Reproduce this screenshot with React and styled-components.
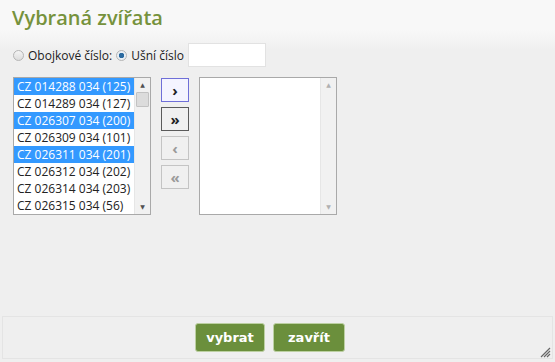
import styled, { createGlobalStyle } from "styled-components";

const Global = createGlobalStyle`
  html, body { margin: 0; padding: 0; }
  body {
    width: 555px;
    height: 362px;
    overflow: hidden;
    background: #f0f0f0;
    font-family: "Open Sans", "DejaVu Sans", sans-serif;
  }
`;

const Dialog = styled.div`
  width: 555px;
  height: 362px;
  display: flex;
  flex-direction: column;
  background: linear-gradient(#f8f8f8 0px, #f8f8f8 30px, #efefef 50px, #efefef 100%);
`;

const Title = styled.h1`
  margin: 0;
  height: 35px;
  padding: 0 12px;
  display: flex;
  align-items: center;
  font-size: 20px;
  font-weight: 600;
  color: #76923c;
`;

const Content = styled.div`
  flex: 1;
  padding: 8px 13px 0 13px;
  display: flex;
  flex-direction: column;
  gap: 10px;
`;

const FilterRow = styled.div`
  display: flex;
  align-items: center;
  height: 24px;
  font-size: 12px;
  color: #222;
`;

const Radio = styled.span`
  width: 9px;
  height: 9px;
  border-radius: 50%;
  border: 1px solid #b5b5b5;
  background: ${p => p.checked
    ? "radial-gradient(circle, #2b6aa0 0 2.5px, #e8eef4 3px)"
    : "linear-gradient(#f4f4f4, #dcdcdc)"};
  margin: 0 4px 0 ${p => p.first ? "0" : "4px"};
`;

const TextBox = styled.span`
  width: 76px;
  height: 22px;
  margin-left: 4px;
  background: #fff;
  border: 1px solid #e2e2e2;
`;

const Picker = styled.div`
  display: flex;
  align-items: flex-start;
`;

const ListBox = styled.div`
  width: 136px;
  height: 136px;
  background: #fff;
  border: 1px solid #a9a9a9;
  display: flex;
`;

const Items = styled.div`
  flex: 1;
  overflow: hidden;
`;

const Item = styled.div`
  height: 17px;
  line-height: 17px;
  padding-left: 3px;
  font-size: 12px;
  white-space: nowrap;
  color: ${p => p.selected ? "#fff" : "#222"};
  background: ${p => p.selected ? "#3399ff" : "transparent"};
`;

const Scrollbar = styled.div`
  width: 15px;
  display: flex;
  flex-direction: column;
  background: #f1f1f1;
  border-left: 1px solid #e6e6e6;
`;

const Arrow = styled.div`
  height: 14px;
  display: flex;
  align-items: center;
  justify-content: center;
  color: ${p => p.dim ? "#b0b0b0" : "#505050"};
  font-size: 6px;
`;

const Thumb = styled.div`
  height: 13px;
  margin: 0 1px;
  background: #dcdcdc;
  border: 1px solid #c2c2c2;
  border-radius: 1px;
`;

const Track = styled.div`
  flex: 1;
`;

const Buttons = styled.div`
  display: flex;
  flex-direction: column;
  gap: 5px;
  margin: 1px 10px 0 10px;
`;

const MoveButton = styled.div`
  width: 26px;
  height: 22px;
  display: flex;
  align-items: center;
  justify-content: center;
  font-size: 15px;
  line-height: 1;
  font-weight: 700;
  color: ${p => p.disabled ? "#9a9a9a" : "#222"};
  background: ${p => p.focused ? "#f4f4ff" : "#f0f0f0"};
  border: 1px solid ${p => p.focused ? "#6f6fd8" : p.disabled ? "#c4c4c4" : "#5a5a5a"};
`;

const Footer = styled.div`
  height: 41px;
  margin: 0 2px 3px 2px;
  border: 1px solid #e4e4e4;
  display: flex;
  justify-content: center;
  align-items: center;
  gap: 8px;
  padding-right: 15px;
  position: relative;
`;

const Action = styled.div`
  width: ${p => p.wide ? "70px" : "68px"};
  height: 27px;
  display: flex;
  align-items: center;
  justify-content: center;
  background: #6b8f3c;
  border: 1px solid #bcd0a2;
  border-radius: 3px;
  color: #fff;
  font-size: 13px;
  font-weight: 700;
  font-family: "DejaVu Sans", "Open Sans", sans-serif;
`;

const Grip = styled.svg`
  position: absolute;
  right: 1px;
  bottom: 0px;
`;

const items = [
  ["CZ 014288 034 (125)", true],
  ["CZ 014289 034 (127)", false],
  ["CZ 026307 034 (200)", true],
  ["CZ 026309 034 (101)", false],
  ["CZ 026311 034 (201)", true],
  ["CZ 026312 034 (202)", false],
  ["CZ 026314 034 (203)", false],
  ["CZ 026315 034 (56)", false],
];

export default function App() {
  return (
    <>
      <Global />
      <Dialog>
        <Title>Vybraná zvířata</Title>
        <Content>
          <FilterRow>
            <Radio first />
            Obojkové číslo:
            <Radio checked />
            Ušní číslo
            <TextBox />
          </FilterRow>
          <Picker>
            <ListBox>
              <Items>
                {items.map(([label, sel]) => (
                  <Item key={label} selected={sel}>{label}</Item>
                ))}
              </Items>
              <Scrollbar>
                <Arrow>▲</Arrow>
                <Thumb />
                <Track />
                <Arrow>▼</Arrow>
              </Scrollbar>
            </ListBox>
            <Buttons>
              <MoveButton focused>›</MoveButton>
              <MoveButton>»</MoveButton>
              <MoveButton disabled>‹</MoveButton>
              <MoveButton disabled>«</MoveButton>
            </Buttons>
            <ListBox>
              <Items />
              <Scrollbar>
                <Arrow dim>▲</Arrow>
                <Track />
                <Arrow dim>▼</Arrow>
              </Scrollbar>
            </ListBox>
          </Picker>
        </Content>
        <Footer>
          <Action>vybrat</Action>
          <Action wide>zavřít</Action>
          <Grip width="12" height="12" viewBox="0 0 12 12">
            <path d="M11 2L2 11M11 5L5 11M11 8L8 11" stroke="#666" strokeWidth="1.2" />
          </Grip>
        </Footer>
      </Dialog>
    </>
  );
}
